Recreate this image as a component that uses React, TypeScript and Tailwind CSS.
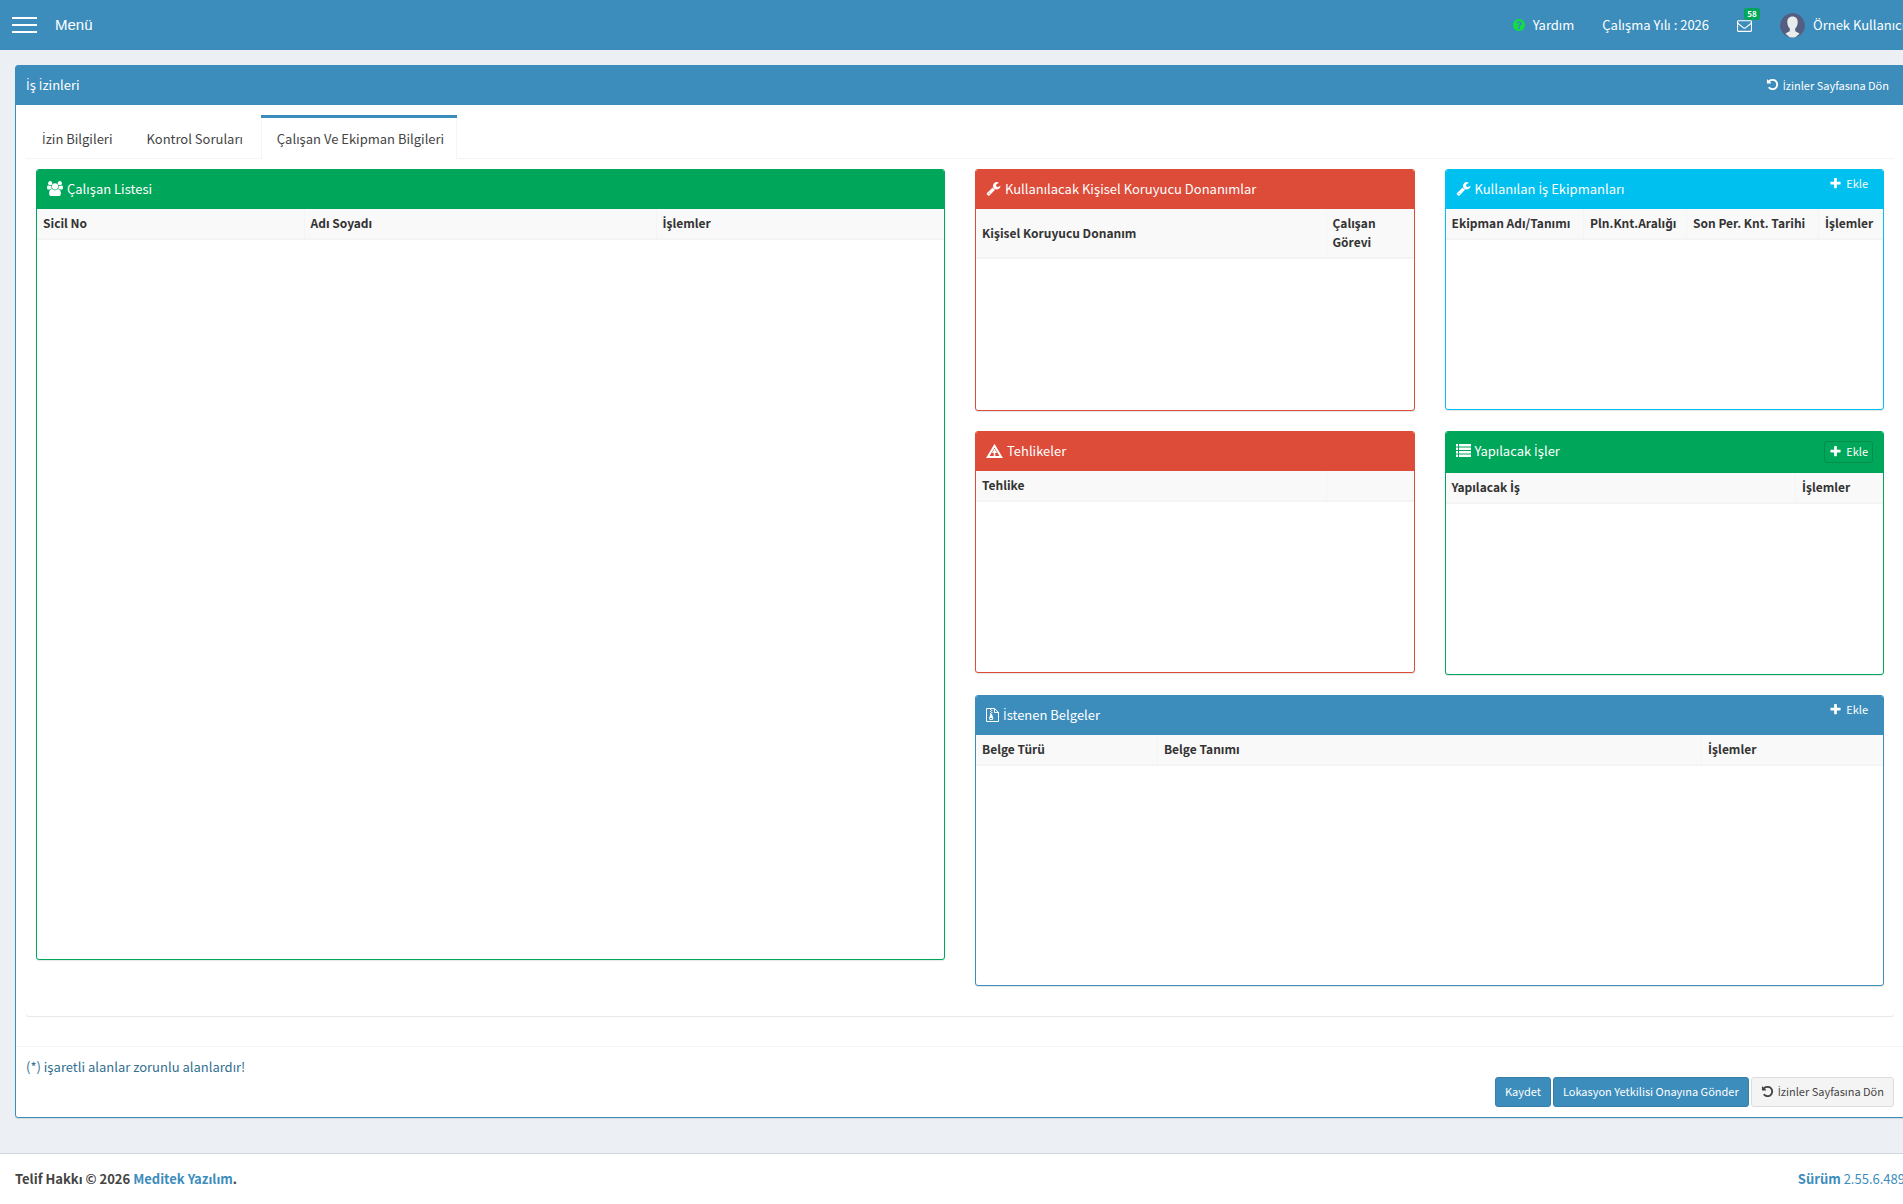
import clsx from 'clsx'
import type { ReactNode } from 'react'

const USERS =
  'M593 896q-162 5-265 128H194q-82 0-138-40.5T0 865q0-353 124-353 6 0 43.5 21t97.5 42.5T384 597q67 0 133-23-5 37-5 66 0 139 81 256zm1071 637q0 120-73 189.5t-194 69.5H523q-121 0-194-69.5T256 1533q0-53 3.5-103.5t14-109T300 1212t43-97.5 62-81 85.5-53.5T602 960q10 0 43 21.5t73 48 107 48 135 21.5 135-21.5 107-48 73-48 43-21.5q61 0 111.5 20t85.5 53.5 62 81 43 97.5 26.5 108.5 14 109 3.5 103.5zM640 256q0 106-75 181t-181 75-181-75-75-181 75-181T384 0t181 75 75 181zm704 384q0 159-112.5 271.5T960 1024 688.5 911.5 576 640t112.5-271.5T960 256t271.5 112.5T1344 640zm576 225q0 78-56 118.5t-138 40.5h-134q-103-123-265-128 81-117 81-256 0-29-5-66 66 23 133 23 59 0 119-21.5t97.5-42.5 43.5-21q124 0 124 353zm-128-609q0 106-75 181t-181 75-181-75-75-181 75-181 181-75 181 75 75 181z'
const WRENCH =
  'M448 1472q0-26-19-45t-45-19-45 19-19 45 19 45 45 19 45-19 19-45zm644-420l-682 682q-37 37-90 37-52 0-91-37L123 1626q-38-36-38-90 0-53 38-91l681-681q39 98 114.5 173.5T1092 1052zm634-435q0 39-23 106-47 134-164.5 217.5T1280 1024q-185 0-316.5-131.5T832 576t131.5-316.5T1280 128q58 0 121.5 16.5T1509 191q16 11 16 28t-16 28l-293 169v224l193 107q5-3 79-48.5t135.5-81T1694 582q15 0 23.5 10t8.5 25z'
const PLUS =
  'M1600 736v192q0 40-28 68t-68 28h-416v416q0 40-28 68t-68 28H800q-40 0-68-28t-28-68v-416H288q-40 0-68-28t-28-68V736q0-40 28-68t68-28h416V224q0-40 28-68t68-28h192q40 0 68 28t28 68v416h416q40 0 68 28t28 68z'
const UNDO =
  'M1664 896q0 156-61 298t-164 245-245 164-298 61q-172 0-327-72.5T305 1387q-7-10-6.5-22.5t8.5-20.5l137-138q10-9 25-9 16 2 23 12 73 95 179 147t225 52q104 0 198.5-40.5T1258 1258t109.5-163.5T1408 896t-40.5-198.5T1258 534t-163.5-109.5T896 384q-98 0-188 35.5T548 521l137 138q31 30 14 69-17 40-59 40H192q-26 0-45-19t-19-45V256q0-42 40-59 39-17 69 14l130 129q107-101 244.5-156.5T896 128q156 0 298 61t245 164 164 245 61 298z'
const QUESTION =
  'M1024 1376v-192q0-14-9-23t-23-9H800q-14 0-23 9t-9 23v192q0 14 9 23t23 9h192q14 0 23-9t9-23zm256-672q0-88-55.5-163t-138.5-116-170-41q-243 0-371 213-15 24 8 42l132 100q7 6 19 6 16 0 25-12 53-68 86-92 34-24 86-24 48 0 85.5 26t37.5 59q0 38-20 61t-68 45q-63 28-115.5 86.5T768 1020v36q0 14 9 23t23 9h192q14 0 23-9t9-23q0-19 21.5-49.5T1100 957q32-18 49-28.5t46-35 44.5-48 28-60.5 12.5-81zm384 192q0 209-103 385.5T1281.5 1561 896 1664t-385.5-103T231 1281.5 128 896t103-385.5T510.5 231 896 128t385.5 103T1561 510.5 1664 896z'
const ENVELOPE =
  'M1664 1504V736q-32 36-69 66-268 206-426 338-51 43-83 67t-86.5 48.5T897 1280h-2q-48 0-102.5-24.5T706 1207t-83-67Q465 1008 197 802q-37-30-69-66v768q0 13 9.5 22.5t22.5 9.5h1472q13 0 22.5-9.5t9.5-22.5zm0-1051v-24.5l-.5-13-3-12.5-5.5-9-9-7.5-14-2.5H160q-13 0-22.5 9.5T128 416q0 168 147 284 193 152 401 317 6 5 35 29.5t46 37.5 44.5 31.5T852 1143t43 9h2q20 0 43-9t50.5-27.5 44.5-31.5 46-37.5 35-29.5q208-165 401-317 54-43 100.5-115.5T1664 453zm128-37v1088q0 66-47 113t-113 47H160q-66 0-113-47T0 1504V416q0-66 47-113t113-47h1472q66 0 113 47t47 113z'

function Icon({ d, wide, className }: { d: string; wide?: boolean; className: string }) {
  return (
    <svg
      viewBox={wide ? '0 0 1920 1792' : '0 0 1792 1792'}
      fill="currentColor"
      className={className}
      aria-hidden="true"
    >
      <path d={d} />
    </svg>
  )
}

function WarningIcon() {
  return (
    <svg viewBox="0 0 17 14" className="h-3.5 w-[17px]" aria-hidden="true">
      <path d="M8.5 1.8 15.2 13H1.8Z" fill="none" stroke="currentColor" strokeWidth="2" />
      <path d="M7.7 5h1.6v7H7.7zM6 8.2l2.5-2.8L11 8.2l-.8.8H6.8z" fill="currentColor" />
    </svg>
  )
}

function ListIcon() {
  return (
    <svg viewBox="0 0 15 13" fill="currentColor" className="h-[13px] w-[15px]" aria-hidden="true">
      <path d="M0 0h2v2.500H0zM0 3.500h2V6H0zM0 7h2v2.500H0zM0 10.500h2V13H0zM3 0h12v2.500H3zM3 3.500h12V6H3zM3 7h12v2.500H3zM3 10.500h12V13H3z" />
    </svg>
  )
}

function ArchiveIcon() {
  return (
    <svg viewBox="0 0 13 14" className="h-3.5 w-[13px]" aria-hidden="true">
      <path d="M.5.5h8l4 4v9H.5zM8.5.5v4h4" fill="none" stroke="currentColor" />
      <path
        d="M4 1h1.2v1H4zM5.2 2h1.2v1H5.2zM4 3h1.2v1H4zM5.2 4h1.2v1H5.2zM4 5h1.2v1H4zM4.4 6h1.6l1.3 4.2c.2 1-.7 1.8-2.1 1.8s-2.3-.8-2.1-1.8zM4.2 10h2v.9h-2z"
        fill="currentColor"
        fillRule="evenodd"
      />
    </svg>
  )
}

function Avatar() {
  return (
    <svg viewBox="0 0 25 25" className="size-[25px] rounded-full" aria-hidden="true">
      <circle cx="12.5" cy="12.5" r="12.5" fill="#545e80" />
      <path
        d="M12.5 3.5c3.4 0 5.2 2.3 5.2 5.4 0 2.5-.9 5.2-2.5 6.6v2.2c0 1 3 1.5 4.3 3L15 24.5h-5l-4.500-3.800c1.300-1.500 4.300-2 4.300-3v-2.200c-1.600-1.400-2.500-4.100-2.500-6.600 0-3.100 1.800-5.400 5.200-5.400z"
        fill="#e8ecec"
      />
    </svg>
  )
}

function Label({ text }: { text: string }) {
  return (
    <span>
      {text.split(/(İ)/).map((part, i) =>
        part === 'İ' ? (
          <span key={i} className="font-['Open_Sans',sans-serif] leading-none">
            İ
          </span>
        ) : (
          part
        ),
      )}
    </span>
  )
}

type Tone = 'success' | 'danger' | 'info' | 'primary'

const BORDER: Record<Tone, string> = {
  success: 'border-[#00a65a]',
  danger: 'border-[#dd4b39]',
  info: 'border-[#00c0ef]',
  primary: 'border-[#3c8dbc]',
}

const HEADER: Record<Tone, string> = {
  success: 'bg-[#00a65a]',
  danger: 'bg-[#dd4b39]',
  info: 'bg-[#00c0ef]',
  primary: 'bg-[#3c8dbc]',
}

interface Column {
  label: string
  width: string
}

interface BoxProps {
  tone: Tone
  title: string
  icon: ReactNode
  columns: Column[]
  className: string
  tools?: ReactNode
}

function Box({ tone, title, icon, columns, className, tools }: BoxProps) {
  return (
    <section
      className={clsx(
        'overflow-hidden rounded-[3px] border bg-white shadow-[0_1px_1px_rgba(0,0,0,0.1)]',
        BORDER[tone],
        className,
      )}
    >
      <header className={clsx('flex justify-between pl-2.5 text-white', HEADER[tone])}>
        <h3 className="flex h-[39px] items-center gap-1 pb-0.5 text-[13px]">
          {icon}
          <Label text={title} />
        </h3>
        {tools}
      </header>
      <table className="w-full table-fixed border-collapse text-left text-xs leading-[19px] text-[#333]">
        <thead>
          <tr className="border-b-2 border-[#f4f4f4] bg-[#f9f9f9]">
            {columns.map((c, i) => (
              <th
                key={c.label || i}
                className={clsx(
                  'border-r border-[#f4f4f4] px-1.5 pt-1 pb-1.5 font-bold last:border-r-0',
                  c.width,
                )}
              >
                <Label text={c.label} />
              </th>
            ))}
          </tr>
        </thead>
        <tbody />
      </table>
    </section>
  )
}

function AddButton({ outlined }: { outlined?: boolean }) {
  return (
    <button
      type="button"
      className={clsx(
        'mr-2.5 flex h-[22px] items-center gap-1 rounded-[3px] border px-1 pb-0.5 text-[11px]',
        outlined ? 'mt-[9px] mb-2.5 border-[#008d4c]' : 'mt-[3px] border-transparent',
      )}
    >
      <Icon d={PLUS} className="size-[13px]" />
      Ekle
    </button>
  )
}

const TABS = ['İzin Bilgileri', 'Kontrol Soruları', 'Çalışan Ve Ekipman Bilgileri']

export default function App() {
  return (
    <div className="min-h-screen overflow-x-hidden bg-[#ecf0f5] font-['Noto_Sans_CJK_SC','Noto_Sans',sans-serif] text-[13px] leading-5 text-[#333]">
      {/* content is slightly wider than the window and gets clipped on the right */}
      <div className="flex min-h-screen w-[calc(100%+17px)] flex-col">
        <nav className="flex h-[50px] items-center justify-between bg-[#3c8dbc] pr-[15px] pl-3 text-white">
          <button type="button" className="flex items-center gap-[18px]">
            <span className="flex flex-col gap-[5px]">
              <span className="h-0.5 w-[25px] bg-white" />
              <span className="h-0.5 w-[25px] bg-white" />
              <span className="h-0.5 w-[25px] bg-white" />
            </span>
            <span className="font-['Liberation_Sans',sans-serif] text-[15px]">Menü</span>
          </button>
          <div className="flex items-center gap-7">
            <a href="#yardim" className="flex items-center gap-[7px]">
              <Icon d={QUESTION} className="size-3.5 text-[#0fe03f]" />
              Yardım
            </a>
            <a href="#yil">Çalışma Yılı : 2026</a>
            <a href="#mesajlar" aria-label="Mesajlar" className="relative">
              <Icon d={ENVELOPE} className="size-[15px]" />
              <span className="absolute -top-2.5 left-[7px] flex h-3 w-4 items-center justify-center rounded-[3px] bg-[#00a65a] text-[8px] font-bold">
                58
              </span>
            </a>
            <a href="#profil" className="flex items-center gap-2">
              <Avatar />
              Örnek Kullanıcı
            </a>
          </div>
        </nav>

        <main className="flex-1 px-[15px] pt-[15px] pb-[35px]">
          <section className="rounded-[3px] border border-[#3c8dbc] bg-white shadow-[0_1px_1px_rgba(0,0,0,0.1)]">
            <header className="flex h-[39px] items-center justify-between bg-[#3c8dbc] px-2.5 pb-0.5 text-white">
              <h1>
                <Label text="İş İzinleri" />
              </h1>
              <a href="#izinler" className="mr-[5px] flex items-center gap-1 text-[11px]">
                <Icon d={UNDO} className="size-[13px]" />
                <Label text="İzinler Sayfasına Dön" />
              </a>
            </header>

            <div className="p-2.5">
              <div className="mb-5 rounded-[3px] shadow-[0_1px_1px_rgba(0,0,0,0.1)]">
                <ul className="flex h-11 border-b border-[#f4f4f4]">
                  {TABS.map((tab, i) => {
                    const active = i === TABS.length - 1
                    return (
                      <li
                        key={tab}
                        className={clsx(
                          'mr-[5px] h-11 border-t-[3px]',
                          active ? 'border-t-[#3c8dbc] bg-white' : 'border-t-transparent',
                        )}
                      >
                        <a
                          href="#tab"
                          className={clsx(
                            'block h-full border-x py-[11px] pr-3 pl-[15px] text-[#444]',
                            active ? 'border-[#f4f4f4]' : 'border-transparent',
                          )}
                        >
                          <Label text={tab} />
                        </a>
                      </li>
                    )
                  })}
                </ul>

                <div className="grid grid-cols-2 items-start gap-[30px] px-2.5 pt-2.5 pb-[30px]">
                  <Box
                    tone="success"
                    title="Çalışan Listesi"
                    icon={<Icon d={USERS} wide className="h-[15px] w-4" />}
                    className="h-[791px]"
                    columns={[
                      { label: 'Sicil No', width: 'w-[267px]' },
                      { label: 'Adı Soyadı', width: 'w-[352px]' },
                      { label: 'İşlemler', width: 'w-auto' },
                    ]}
                  />
                  <div className="grid grid-cols-2 items-start gap-x-[30px] gap-y-5">
                    <Box
                      tone="danger"
                      title="Kullanılacak Kişisel Koruyucu Donanımlar"
                      icon={<Icon d={WRENCH} className="size-[15px]" />}
                      className="h-[242px]"
                      columns={[
                        { label: 'Kişisel Koruyucu Donanım', width: 'w-4/5' },
                        { label: 'Çalışan Görevi', width: 'w-1/5' },
                      ]}
                    />
                    <Box
                      tone="info"
                      title="Kullanılan İş Ekipmanları"
                      icon={<Icon d={WRENCH} className="size-[15px]" />}
                      className="h-[241px]"
                      tools={<AddButton />}
                      columns={[
                        { label: 'Ekipman Adı/Tanımı', width: 'w-[138px]' },
                        { label: 'Pln.Knt.Aralığı', width: 'w-[103px]' },
                        { label: 'Son Per. Knt. Tarihi', width: 'w-[132px]' },
                        { label: 'İşlemler', width: 'w-auto' },
                      ]}
                    />
                    <Box
                      tone="danger"
                      title="Tehlikeler"
                      icon={<WarningIcon />}
                      className="h-[242px]"
                      columns={[
                        { label: 'Tehlike', width: 'w-4/5' },
                        { label: '', width: 'w-1/5' },
                      ]}
                    />
                    <Box
                      tone="success"
                      title="Yapılacak İşler"
                      icon={<ListIcon />}
                      className="h-[244px]"
                      tools={<AddButton outlined />}
                      columns={[
                        { label: 'Yapılacak İş', width: 'w-4/5' },
                        { label: 'İşlemler', width: 'w-1/5' },
                      ]}
                    />
                    <Box
                      tone="primary"
                      title="İstenen Belgeler"
                      icon={<ArchiveIcon />}
                      className="col-span-2 h-[291px]"
                      tools={<AddButton />}
                      columns={[
                        { label: 'Belge Türü', width: 'w-1/5' },
                        { label: 'Belge Tanımı', width: 'w-3/5' },
                        { label: 'İşlemler', width: 'w-1/5' },
                      ]}
                    />
                  </div>
                </div>
              </div>
            </div>

            <footer className="border-t border-[#f4f4f4] p-2.5">
              <p className="text-[#31708f]">(*) işaretli alanlar zorunlu alanlardır!</p>
              <div className="flex justify-end gap-0.5 text-[11px]">
                <button
                  type="button"
                  className="h-[30px] rounded-[3px] border border-[#367fa9] bg-[#3c8dbc] px-[9px] pb-0.5 text-white"
                >
                  Kaydet
                </button>
                <button
                  type="button"
                  className="h-[30px] rounded-[3px] border border-[#367fa9] bg-[#3c8dbc] px-[9px] pb-0.5 text-white"
                >
                  Lokasyon Yetkilisi Onayına Gönder
                </button>
                <button
                  type="button"
                  className="flex h-[30px] items-center gap-1 rounded-[3px] border border-[#ddd] bg-[#f4f4f4] px-[9px] pb-0.5 text-[#444]"
                >
                  <Icon d={UNDO} className="size-[13px]" />
                  <Label text="İzinler Sayfasına Dön" />
                </button>
              </div>
            </footer>
          </section>
        </main>

        <footer className="flex items-center justify-between border-t border-[#d2d6de] bg-white p-[15px] text-[#444]">
          <strong>
            Telif Hakkı © 2026{' '}
            <a href="#meditek" className="text-[#3c8dbc]">
              Meditek Yazılım
            </a>
            .
          </strong>
          <p className="text-[#3c8dbc]">
            <b>Sürüm</b> 2.55.6.489
          </p>
        </footer>
      </div>
    </div>
  )
}
